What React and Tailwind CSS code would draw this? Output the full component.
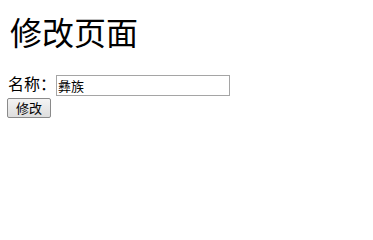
export default function App() {
  return (
    <div className="bg-white min-h-[212px] px-2 pt-[14px] text-black font-['Liberation_Serif','Noto_Sans_CJK_SC',serif]">
      <h1 className="text-[32px] leading-[40px] ml-[2px]">修改页面</h1>
      <form className="mt-[20px]">
        <div className="flex items-center h-[22px]">
          <span className="text-[16px] leading-[22px]">名称：</span>
          <input
            type="text"
            defaultValue="彝族"
            className="w-[174px] h-[21px] border border-[#a5a5a5] px-[1px] text-[13px] font-['Noto_Sans_CJK_SC',sans-serif] outline-none"
          />
        </div>
        <button
          type="button"
          className="mt-px w-[44px] h-[20px] ml-[-1px] border border-[#8a8a8a] rounded-[2px] bg-gradient-to-b from-[#f4f4f4] to-[#dedede] text-[13px] leading-[18px] font-['Noto_Sans_CJK_SC',sans-serif]"
        >
          修改
        </button>
      </form>
    </div>
  );
}
